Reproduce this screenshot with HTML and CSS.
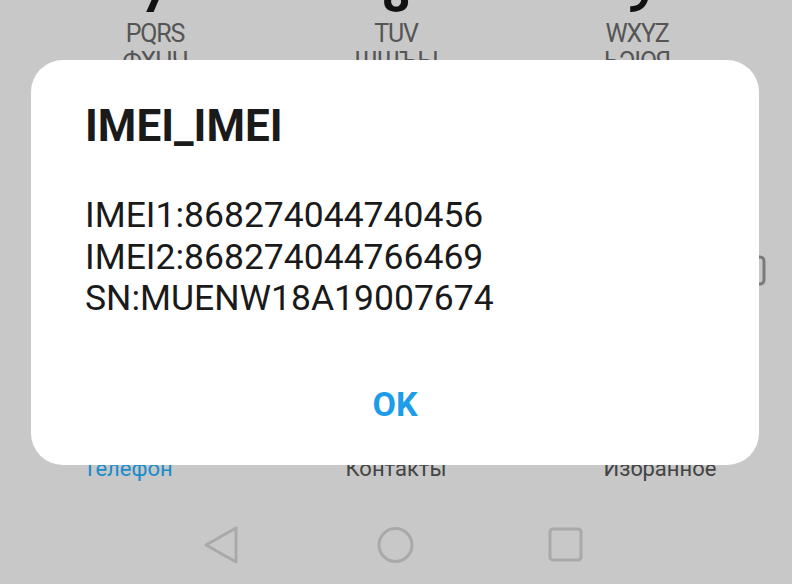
FILE: index.html
```html
<!DOCTYPE html>
<html lang="ru">
<head>
<meta charset="utf-8">
<title>IMEI</title>
<link rel="stylesheet" href="styles.css">
</head>
<body>
<div class="screen">
  <div class="keys">
    <div class="key"><span class="digit">7</span><span class="letters">PQRS</span><span class="letters">ФХЦЧ</span></div>
    <div class="key"><span class="digit">8</span><span class="letters">TUV</span><span class="letters">ШЩЪЫ</span></div>
    <div class="key"><span class="digit">9</span><span class="letters">WXYZ</span><span class="letters">ЬЭЮЯ</span></div>
  </div>
  <div class="mid">
    <svg class="side-icon" width="30" height="34" viewBox="0 0 30 34"><rect x="2" y="3" width="24" height="27" rx="4" fill="none" stroke="#7a7a7a" stroke-width="3"/></svg>
  </div>
  <div class="tabs">
    <span class="tab active">Телефон</span>
    <span class="tab">Контакты</span>
    <span class="tab">Избранное</span>
  </div>
  <div class="nav">
    <div class="nav-item"><svg width="40" height="40" viewBox="0 0 40 40"><path d="M32 3 L32 37 L2 20 Z" fill="none" stroke="#a9a9a9" stroke-width="3" stroke-linejoin="round"/></svg></div>
    <div class="nav-item"><svg width="40" height="40" viewBox="0 0 40 40"><circle cx="19.5" cy="20" r="16.5" fill="none" stroke="#a9a9a9" stroke-width="3"/></svg></div>
    <div class="nav-item"><svg width="40" height="40" viewBox="0 0 40 40"><rect x="2" y="4" width="31" height="31" rx="3" fill="none" stroke="#a9a9a9" stroke-width="3"/></svg></div>
  </div>

  <div class="dialog">
    <div class="dialog-title">IMEI_IMEI</div>
    <div class="dialog-body">
      <div>IMEI1:868274044740456</div>
      <div>IMEI2:868274044766469</div>
      <div>SN:MUENW18A19007674</div>
    </div>
    <div class="dialog-actions"><span class="ok">OK</span></div>
  </div>
</div>
</body>
</html>
```

FILE: styles.css
```css
* { box-sizing: border-box; }
html, body { margin: 0; padding: 0; }
body {
  background: #c8c8c8;
  font-family: Roboto, "Noto Sans", sans-serif;
}
.screen {
  position: relative;
  width: 792px;
  height: 584px;
  overflow: hidden;
  display: flex;
  flex-direction: column;
}
.keys {
  display: grid;
  grid-template-columns: repeat(3, 241px);
  justify-content: center;
  margin-top: -30px;
}
.key {
  display: flex;
  flex-direction: column;
  align-items: center;
}
.digit {
  font-size: 50px;
  line-height: 50px;
  font-weight: 700;
  color: #111;
}
.letters {
  font-size: 25px;
  line-height: 28px;
  color: #555;
  letter-spacing: -1.2px;
}
.mid {
  flex: 1;
  display: flex;
  justify-content: flex-end;
  align-items: flex-start;
  padding-top: 178px;
  padding-right: 24px;
}
.tabs {
  display: grid;
  grid-template-columns: repeat(3, 1fr);
  text-align: center;
  font-size: 22px;
  line-height: 30px;
  color: #444;
  height: 40px;
  padding-top: 4px;
}
.tab.active { color: #1a8ccc; padding-right: 8px; }
.nav {
  height: 94px;
  display: flex;
  justify-content: center;
  padding-top: 35px;
}
.nav-item {
  width: 172px;
  display: flex;
  justify-content: center;
}
.dialog {
  position: absolute;
  left: 31px;
  top: 60px;
  width: 728px;
  height: 405px;
  background: #fff;
  border-radius: 32px;
  padding: 41px 54px 0 54px;
  color: #1a1a1a;
}
.dialog-title {
  font-size: 44px;
  line-height: 50px;
  font-weight: 700;
}
.dialog-body {
  margin-top: 44px;
  font-size: 35.5px;
  line-height: 41.5px;
}
.dialog-actions {
  margin-top: 64px;
  text-align: center;
}
.ok {
  font-size: 34px;
  line-height: 40px;
  font-weight: 700;
  color: #1d9ce8;
}
```
